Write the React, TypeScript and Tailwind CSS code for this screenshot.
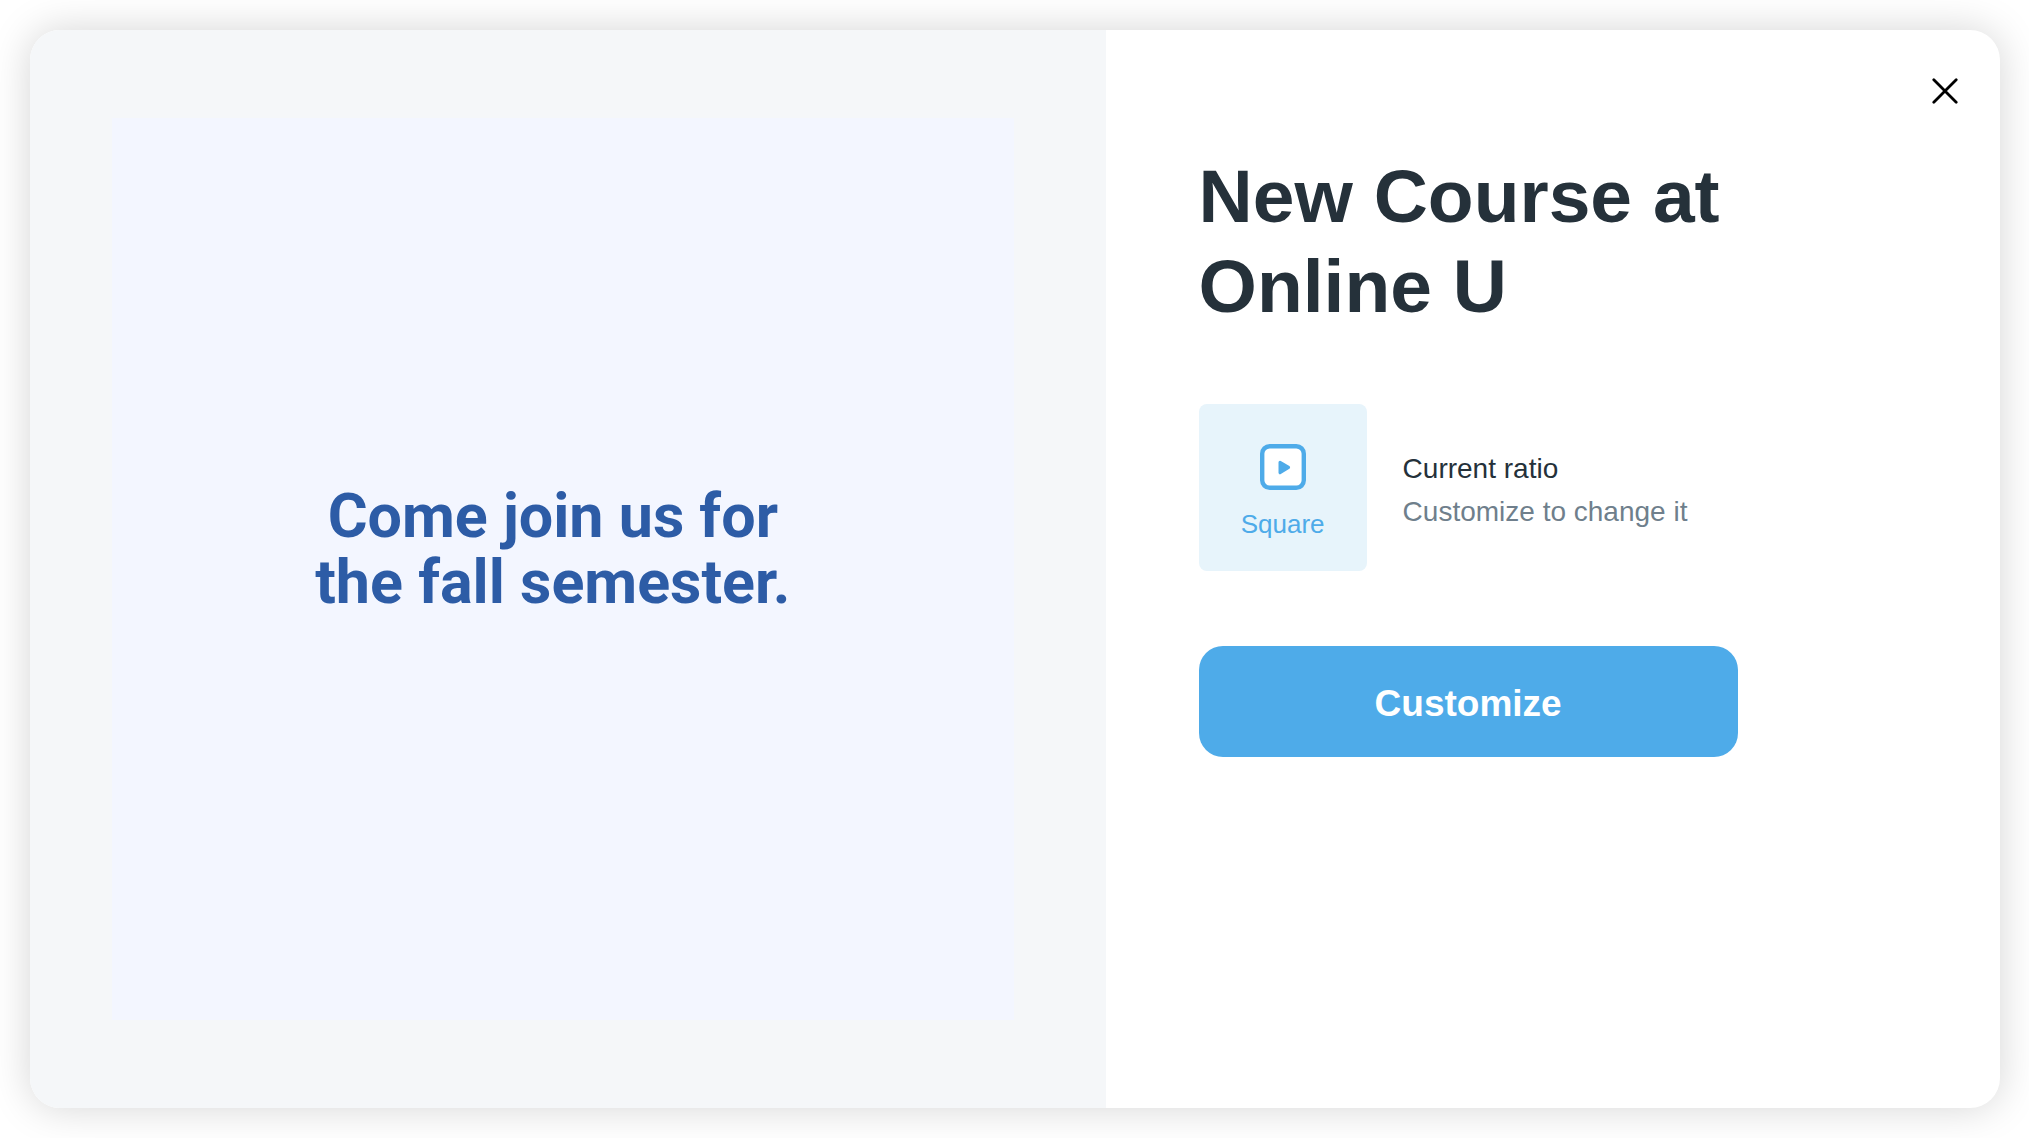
import React from "react";

type RatioCardType = {
  label: string;
};

const RatioCard = ({ label }: RatioCardType) => {
  return (
    <div className="flex h-[167px] w-[168px] shrink-0 flex-col items-center gap-[14px] rounded-lg bg-[#e7f4fb] pt-10 text-[#4eabe9]">
      <svg width="46" height="46" viewBox="0 0 46 46" aria-hidden="true">
        <rect
          x="2.2"
          y="2.2"
          width="41.6"
          height="41.6"
          rx="7.5"
          fill="#ffffff"
          stroke="currentColor"
          strokeWidth="4.4"
        />
        <path
          d="M20 18.2 L28.6 23.4 L20 28.8 Z"
          fill="currentColor"
          stroke="currentColor"
          strokeWidth="3"
          strokeLinejoin="round"
        />
      </svg>
      <span className="text-[26px] leading-[40px]">{label}</span>
    </div>
  );
};

const VideoPreview = () => {
  return (
    <section className="flex w-[54.6%] items-center bg-[#f5f7f9] pr-[92px] pl-[82px]">
      <div className="flex aspect-square w-full items-center justify-center bg-[#f3f6ff] pr-5 pb-10">
        <p className="text-center font-['Roboto',sans-serif] text-[61px] leading-[66px] font-bold text-[#2d5ca6]">
          Come join us for
          <br />
          the fall semester.
        </p>
      </div>
    </section>
  );
};

const App = () => {
  return (
    <main className="flex min-h-screen bg-white py-[30px] pr-[29px] pl-[30px] font-['Liberation_Sans',Arial,sans-serif]">
      <div
        role="dialog"
        aria-labelledby="template-title"
        className="flex w-full overflow-hidden rounded-[30px] bg-white shadow-[0_0_40px_rgba(0,0,0,0.17)]"
      >
        <VideoPreview />
        <section className="flex flex-1 items-start justify-between pr-10 pl-[93px]">
          <div className="w-[539px] pt-[121px]">
            <h1
              id="template-title"
              className="text-[75px] leading-[90px] font-bold text-[#25313a]"
            >
              New Course at Online U
            </h1>
            <div className="mt-[73px] flex items-center gap-9">
              <RatioCard label="Square" />
              <div className="pt-1 text-[28px] leading-[43px] whitespace-nowrap">
                <p className="text-[#25313a]">Current ratio</p>
                <p className="text-[#6f7f8c]">Customize to change it</p>
              </div>
            </div>
            <button
              type="button"
              className="mt-[75px] h-[111px] w-full rounded-3xl bg-[#4eabe9] pt-1 text-[37px] font-bold text-white"
            >
              Customize
            </button>
          </div>
          <button type="button" aria-label="Close" className="mt-[46px] p-0.5">
            <svg width="26" height="26" viewBox="0 0 26 26" aria-hidden="true">
              <path
                d="M1.8 1.8 L24.2 24.2 M24.2 1.8 L1.8 24.2"
                stroke="#000000"
                strokeWidth="2.8"
                strokeLinecap="round"
              />
            </svg>
          </button>
        </section>
      </div>
    </main>
  );
};

export default App;
